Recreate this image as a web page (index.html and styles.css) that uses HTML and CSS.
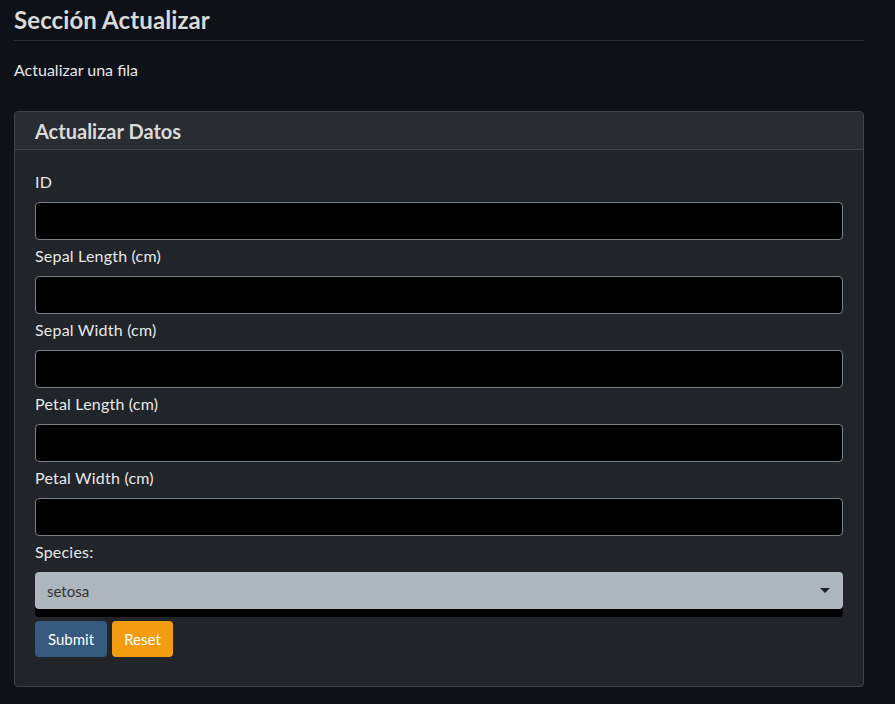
FILE: index.html
```html
<!DOCTYPE html>
<html lang="es">
<head>
<meta charset="utf-8">
<title>Sección Actualizar</title>
<link rel="stylesheet" href="styles.css">
</head>
<body>
<div class="page">
  <h2 class="title">Sección Actualizar</h2>
  <hr class="rule">
  <p class="lead">Actualizar una fila</p>
  <div class="card">
    <div class="card-header">Actualizar Datos</div>
    <div class="card-body">
      <div class="group">
        <label class="label">ID</label>
        <input class="input" type="text">
      </div>
      <div class="group">
        <label class="label">Sepal Length (cm)</label>
        <input class="input" type="text">
      </div>
      <div class="group">
        <label class="label">Sepal Width (cm)</label>
        <input class="input" type="text">
      </div>
      <div class="group">
        <label class="label">Petal Length (cm)</label>
        <input class="input" type="text">
      </div>
      <div class="group">
        <label class="label">Petal Width (cm)</label>
        <input class="input" type="text">
      </div>
      <div class="group group-select">
        <label class="label">Species:</label>
        <div class="select-wrap">
          <div class="select">
            <span class="select-value">setosa</span>
            <svg class="caret" width="10" height="6" viewBox="0 0 10 6"><path d="M0 0 H10 L5 5 Z" fill="#222"/></svg>
          </div>
        </div>
      </div>
      <div class="actions">
        <button class="btn btn-primary" type="button">Submit</button>
        <button class="btn btn-warning" type="button">Reset</button>
      </div>
    </div>
  </div>
</div>
</body>
</html>
```

FILE: styles.css
```css
html, body {
  margin: 0;
  padding: 0;
  background: #0e1118;
  color: #e6e6e6;
  font-family: Lato, "Open Sans", "Liberation Sans", sans-serif;
  font-size: 15px;
}

.page {
  width: 850px;
  padding: 0 14px;
}

.title {
  margin: 0;
  padding-top: 5px;
  font-size: 24px;
  font-weight: 700;
  line-height: 30px;
  color: #dadada;
  letter-spacing: 0.1px;
}

.rule {
  margin: 5px 0 0 0;
  border: 0;
  border-top: 1px solid #2a2f36;
  height: 0;
}

.lead {
  margin: 18px 0 0 0;
  line-height: 22px;
  font-size: 16px;
  color: #e6e6e6;
}

.card {
  margin-top: 30px;
  background: #212428;
  border: 1px solid #3f4348;
  border-radius: 4px;
}

.card-header {
  height: 37px;
  line-height: 38px;
  padding: 0 20px;
  background: #292c31;
  border-bottom: 1px solid #3f4348;
  border-radius: 4px 4px 0 0;
  font-size: 20px;
  font-weight: 700;
  color: #dadada;
}

.card-body {
  padding: 21px 20px 29px 20px;
}

.group {
  display: flex;
  flex-direction: column;
  margin-bottom: 5px;
}

.label {
  line-height: 22px;
  margin-bottom: 9px;
  font-size: 16px;
  letter-spacing: 0.2px;
  color: #e8e8e8;
}

.input {
  box-sizing: border-box;
  height: 38px;
  width: 100%;
  background: #000;
  border: 1px solid #7b8088;
  border-radius: 4px;
  color: #fff;
  font: inherit;
  padding: 0 12px;
}

.group-select {
  margin-bottom: 4px;
}

.select-wrap {
  background: #000;
  border-radius: 4px;
  padding-bottom: 8px;
}

.select {
  height: 37px;
  box-sizing: border-box;
  background: #adb5bd;
  border-radius: 4px;
  display: flex;
  align-items: center;
  justify-content: space-between;
  padding: 0 12px 0 12px;
  color: #333;
}

.select-value {
  font-size: 15px;
}

.caret {
  display: block;
  margin-right: 1px;
}

.actions {
  display: flex;
  gap: 5px;
}

.btn {
  height: 36px;
  border: 0;
  border-radius: 4px;
  font: inherit;
  font-size: 15px;
  color: #fff;
  padding: 0 12px;
  cursor: pointer;
}

.btn-primary {
  background: #375a7f;
  width: 72px;
}

.btn-warning {
  background: #f39c12;
  width: 61px;
}
```
